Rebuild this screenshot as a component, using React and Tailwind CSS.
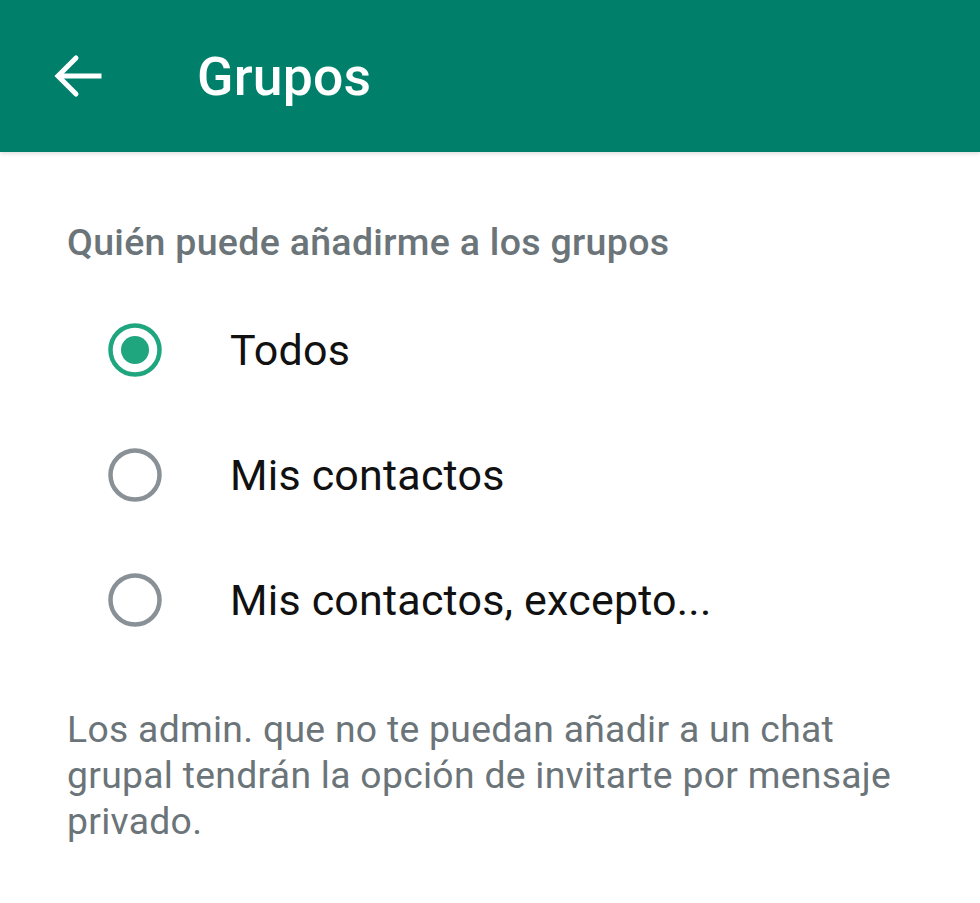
import React from "react";

function Radio({ checked }) {
  return (
    <svg width="56" height="56" viewBox="0 0 56 56" className="shrink-0">
      <circle cx="28" cy="28" r="24.5" fill="none" stroke={checked ? "#1fa67f" : "#8a9196"} strokeWidth="4.5" />
      {checked && <circle cx="28" cy="28" r="14" fill="#1fa67f" />}
    </svg>
  );
}

export default function App() {
  const opts = [
    { label: "Todos", checked: true },
    { label: "Mis contactos", checked: false },
    { label: "Mis contactos, excepto...", checked: false },
  ];
  return (
    <div className="w-[980px] h-[903px] bg-white overflow-hidden" style={{ fontFamily: "Roboto, 'Noto Sans', sans-serif" }}>
      <header className="h-[152px] bg-[#00806a] flex items-center shadow-[0_2px_4px_rgba(0,0,0,0.12)] relative">
        <div className="w-[197px] pl-[53px] flex items-center">
          <svg width="50" height="46" viewBox="0 0 50 46" fill="none" stroke="white" strokeWidth="5" strokeLinecap="square">
            <path d="M46 23H7" />
            <path d="M23 5L5 23l18 18" strokeLinecap="round" strokeLinejoin="miter" />
          </svg>
        </div>
        <h1 className="text-white text-[53.5px] font-medium leading-none tracking-[0.2px] mt-[2px]">Grupos</h1>
      </header>
      <div className="pl-[67px] pt-[70px]">
        <div className="text-[#6b7479] text-[37.5px] font-medium leading-[40px] tracking-[0.3px]">Quién puede añadirme a los grupos</div>
      </div>
      <div className="pt-[60px] flex flex-col gap-[69px]">
        {opts.map((o) => (
          <div key={o.label} className="flex items-center pl-[107px] h-[56px]">
            <Radio checked={o.checked} />
            <span className="ml-[67px] text-[#111] text-[43px] leading-none tracking-[0.2px]">{o.label}</span>
          </div>
        ))}
      </div>
      <p className="pl-[67px] pt-[78px] text-[#6b7479] text-[37.3px] leading-[46px] tracking-[0.3px] whitespace-nowrap">
        Los admin. que no te puedan añadir a un chat
        <br />
        grupal tendrán la opción de invitarte por mensaje
        <br />
        privado.
      </p>
    </div>
  );
}
